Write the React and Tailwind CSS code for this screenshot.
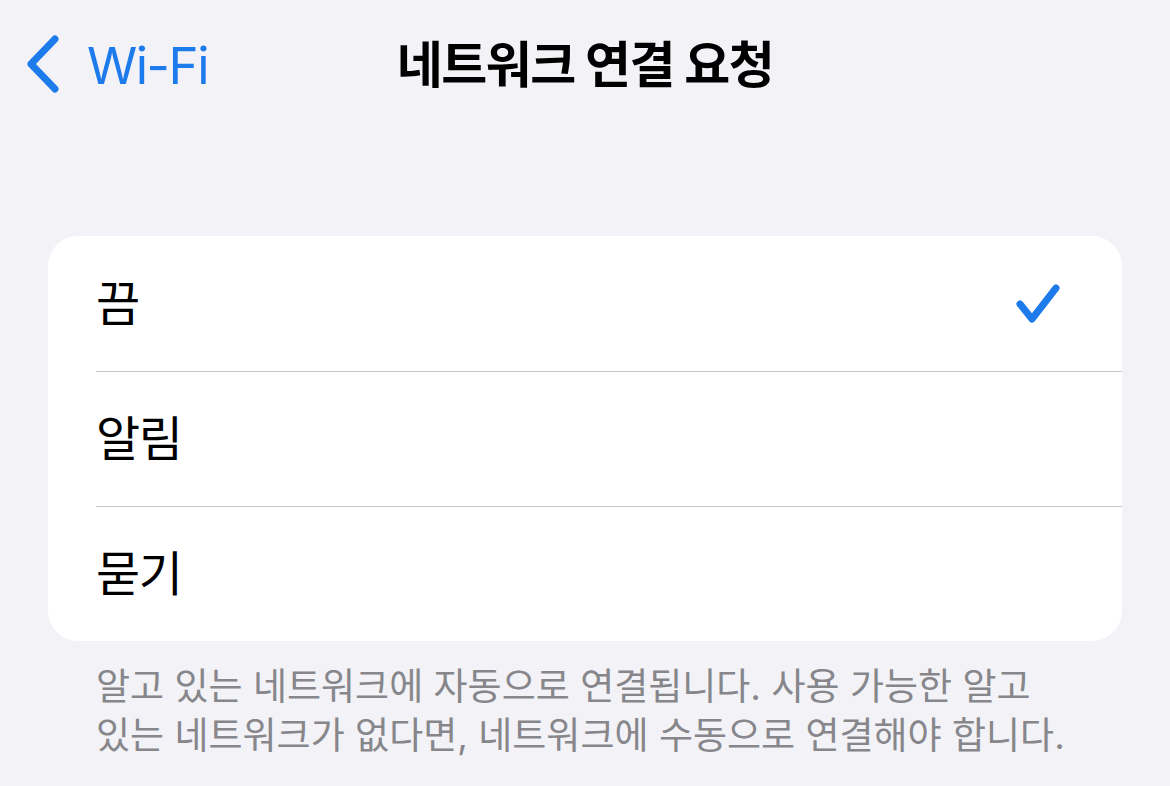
const rows = [
  { label: '끔', checked: true },
  { label: '알림', checked: false },
  { label: '묻기', checked: false },
]

function BackChevron() {
  return (
    <svg width="40" height="60" viewBox="0 0 40 60" className="shrink-0">
      <path
        d="M29 4 L5 29 L29 54"
        fill="none"
        stroke="#1d7bec"
        strokeWidth="7"
        strokeLinecap="round"
        strokeLinejoin="round"
      />
    </svg>
  )
}

function Check() {
  return (
    <svg width="50" height="50" viewBox="0 0 50 50" className="shrink-0">
      <path
        d="M6 25 L18 40 L42 9"
        fill="none"
        stroke="#1d7bec"
        strokeWidth="7"
        strokeLinecap="round"
        strokeLinejoin="round"
      />
    </svg>
  )
}

export default function App() {
  return (
    <div
      className="h-[786px] w-[1170px] overflow-hidden bg-[#f2f2f7]"
      style={{ fontFamily: '"Inter", "Noto Sans CJK KR", sans-serif' }}
    >
      <header className="grid h-[130px] grid-cols-[1fr_auto_1fr] items-center">
        <div className="flex items-center gap-[21px] pl-[26px]">
          <BackChevron />
          <span className="text-[51px] leading-none tracking-[-1.5px] text-[#1d7bec]">
            Wi-Fi
          </span>
        </div>
        <h1 className="text-[50px] font-bold leading-none tracking-[-1.5px] text-black">
          네트워크 연결 요청
        </h1>
        <div />
      </header>

      <section className="mx-[48px] mt-[106px] overflow-hidden rounded-[30px] bg-white">
        {rows.map((row, i) => (
          <div key={row.label} className="h-[135px] pl-[48px]">
            <div
              className={`flex h-full items-center justify-between pr-[58px] ${
                i > 0 ? 'border-t border-[#c8c8cc]' : ''
              }`}
            >
              <span className="text-[48px] leading-none tracking-[-1.5px] text-black">
                {row.label}
              </span>
              {row.checked && <Check />}
            </div>
          </div>
        ))}
      </section>

      <p className="mt-[21px] whitespace-nowrap px-[96px] text-[37px] leading-[49px] tracking-[0px] text-[#86868b]">
        알고 있는 네트워크에 자동으로 연결됩니다. 사용 가능한 알고
        <br />
        있는 네트워크가 없다면, 네트워크에 수동으로 연결해야 합니다.
      </p>
    </div>
  )
}
